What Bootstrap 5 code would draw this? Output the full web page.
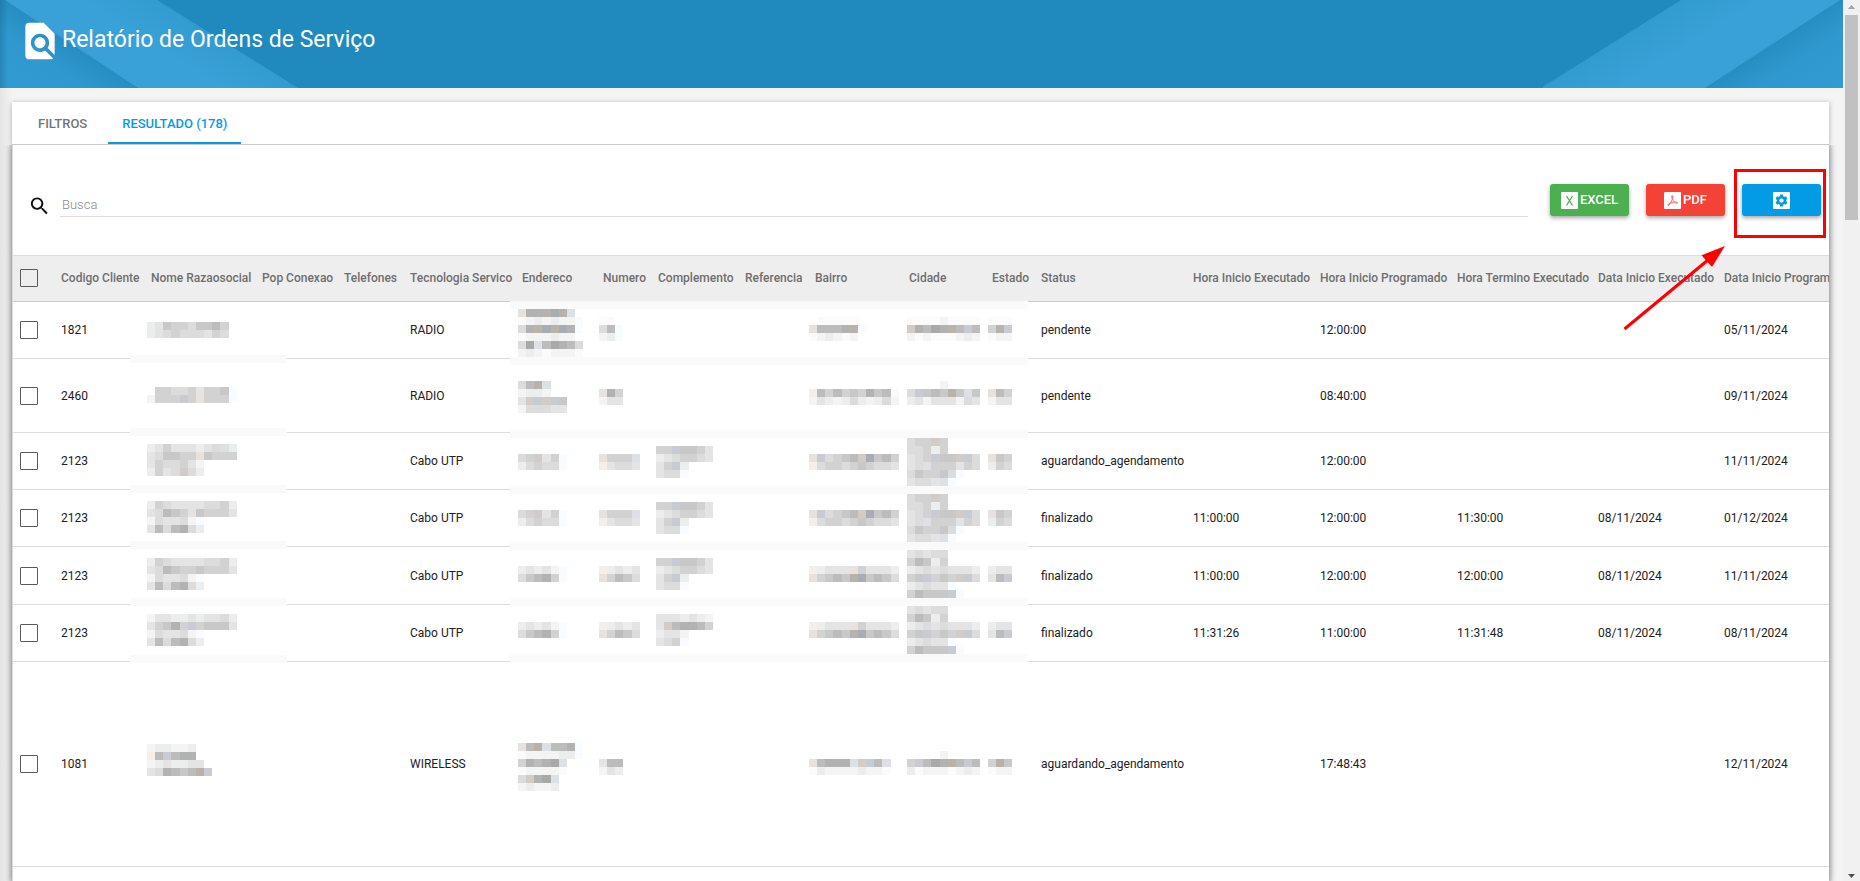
<!DOCTYPE html>
<html lang="pt-BR">
<head>
<meta charset="utf-8">
<meta name="viewport" content="width=device-width, initial-scale=1">
<title>Relatório de Ordens de Serviço</title>
<link href="https://cdn.jsdelivr.net/npm/bootstrap@5.3.0/dist/css/bootstrap.min.css" rel="stylesheet">
<style>
  body { font-family: Roboto, sans-serif; font-size: 12px; color: #212121; background: #f4f4f4; }
  .page-head { height: 88px; background: #2089be; color: #fff; padding-left: 18px; padding-top: 19px; }
  .page-head h1 { font-size: 23px; font-weight: 400; line-height: 28px; margin: 0; padding-top: 7px; }
  .band { position: absolute; top: 0; height: 88px; width: 300px; }
  .band-left { left: 0; }
  .band-right { right: 0; transform: scaleX(-1); }
  .page-body { padding: 14px 14px 0 12px; background: linear-gradient(90deg, #e4e4e4, #f4f4f4 12px); }
  .tab-bar { height: 43px; padding-left: 12px; gap: 7px; background: #fff; border-bottom: 1px solid #c8c8c8; box-shadow: 0 1px 5px rgba(0,0,0,.3); }
  .tab-bar .nav-link { height: 42px; padding: 1px 14px 0; font-size: 13px; line-height: 42px; font-weight: 500; color: #757575; border-bottom: 2px solid transparent; }
  .tab-bar .nav-link.active { color: #039be5; border-color: #039be5; }
  .panel { background: #fff; border-left: 1px solid #dcdcdc; box-shadow: 0 1px 6px 1px rgba(0,0,0,.5); position: relative; clip-path: inset(0 -12px -12px -12px); }
  .tools { height: 110px; padding: 39px 8px 0 15px; }
  .search-box { border: 0; border-bottom: 1px solid #dcdcdc; border-radius: 0; padding: 8px 2px 0; height: 33px; font-size: 13px; margin-right: 22px; margin-left: 9px; background: none; }
  .search-box::placeholder { color: #8c8c8c; font-weight: 300; }
  .tool-btn { width: 79px; height: 32px; padding: 0; border: 0; border-radius: 3px; font-size: 13px; font-weight: 500; color: #fff; box-shadow: 0 2px 4px rgba(0,0,0,.35); gap: 2px; }
  .btn-excel, .btn-excel:hover { background: #4caf50; color: #fff; }
  .btn-pdf, .btn-pdf:hover { background: #f44336; color: #fff; }
  .btn-gear, .btn-gear:hover { background: #039be5; color: #fff; }
  .highlight { position: absolute; top: -15px; left: -8px; right: -5px; bottom: -22px; border: 3px solid #f00; pointer-events: none; }
  .pointer { position: absolute; top: 100px; right: 102px; pointer-events: none; }
  .tool-list { gap: 17px; }
  .grid-wrap { position: relative; overflow: hidden; }
  .orders { width: 1843px; table-layout: fixed; border-collapse: separate; border-spacing: 0; }
  .orders th, .orders td { padding: 0 7px; height: 57px; border-bottom: 1px solid #dcdcdc; white-space: nowrap; vertical-align: middle; font-size: 12px; }
  .orders th { height: 47px; padding-bottom: 2px; background: #eee; border-top: 1px solid #dcdcdc; border-bottom-color: #ccc; color: #6e6e6e; font-weight: 500; }
  .orders tr.tall td { height: 74px; }
  .orders tr.mid td { height: 58px; }
  .orders tr.huge td { height: 205px; }
  .orders input { appearance: none; display: block; width: 18px; height: 18px; border: 1px solid #5a5a5a; border-radius: 1px; margin: 0; background: transparent; }
  .redaction { position: absolute; top: 0; left: 0; pointer-events: none; }
  .rail { width: 17px; background: #f1f1f1; padding: 0 2px; }
  .rail-thumb { height: 23.3%; background: #c1c1c1; }
</style>
</head>
<body class="d-flex vh-100 overflow-hidden">
<div class="flex-grow-1 d-flex flex-column overflow-hidden">
  <header class="page-head position-relative d-flex align-items-start flex-shrink-0">
    <svg class="band band-left" viewBox="0 0 300 88" aria-hidden="true">
      <defs>
        <linearGradient id="corner" gradientUnits="userSpaceOnUse" x1="0" y1="88" x2="48" y2="15"><stop offset="0" stop-color="#329bd2"/><stop offset=".55" stop-color="#2f98ce"/><stop offset="1" stop-color="#2389bd"/></linearGradient>
        <linearGradient id="edge"><stop offset="0" stop-color="#003355" stop-opacity=".2"/><stop offset="1" stop-color="#003355" stop-opacity="0"/></linearGradient>
        <linearGradient id="stripe" gradientUnits="userSpaceOnUse" x1="190" y1="70" x2="215" y2="30"><stop offset="0" stop-color="#39a1d7"/><stop offset="1" stop-color="#319acf"/></linearGradient>
      </defs>
      <path d="M0 0H5L138 88H0z" fill="url(#corner)"/>
      <path d="M5 0H157L298 88H138z" fill="url(#stripe)"/>
      <path d="M0 0H8V88H0z" fill="url(#edge)"/>
    </svg>
    <svg class="band band-right" viewBox="0 0 300 88" aria-hidden="true">
      <path d="M0 0H3L138 88H0z" fill="url(#corner)"/>
      <path d="M3 0H162L302 88H138z" fill="url(#stripe)"/>
    </svg>
    <svg class="position-relative" width="44" height="44" viewBox="0 0 24 24" fill="#fff" aria-hidden="true"><path d="M20 19.59V8l-6-6H6c-1.1 0-1.99.9-1.99 2L4 20c0 1.1.89 2 1.99 2H18c.45 0 .85-.15 1.19-.4l-4.43-4.43c-.8.52-1.74.83-2.76.83-2.76 0-5-2.24-5-5s2.24-5 5-5 5 2.24 5 5c0 1.02-.31 1.96-.83 2.75L20 19.59zM9 13c0 1.66 1.34 3 3 3s3-1.34 3-3-1.34-3-3-3-3 1.34-3 3z"/></svg>
    <h1 class="position-relative">Relatório de Ordens de Serviço</h1>
  </header>

  <main class="page-body flex-grow-1 d-flex flex-column overflow-hidden">
    <nav class="nav tab-bar flex-shrink-0">
      <a class="nav-link" href="#filtros">FILTROS</a>
      <a class="nav-link active" href="#resultado" aria-current="page">RESULTADO (178)</a>
    </nav>
    <section class="panel flex-grow-1" id="resultado">
      <div class="tools d-flex align-items-start">
        <svg class="flex-shrink-0 mt-1" width="23" height="36" viewBox="0 0 24 24" fill="#111" aria-hidden="true"><path d="M15.5 14h-.79l-.28-.27C15.41 12.59 16 11.11 16 9.5 16 5.91 13.09 3 9.5 3S3 5.91 3 9.5 5.91 16 9.5 16c1.61 0 3.09-.59 4.23-1.57l.27.28v.79l5 4.99L20.49 19l-4.99-5zm-6 0C7.01 14 5 11.99 5 9.5S7.01 5 9.5 5 14 7.01 14 9.5 11.99 14 9.5 14z"/></svg>
        <input class="search-box flex-grow-1" type="text" placeholder="Busca" aria-label="Busca">
        <div class="tool-list d-flex">
          <button type="button" class="btn tool-btn btn-excel d-flex align-items-center justify-content-center">
            <svg width="17" height="17" viewBox="0 0 17 17" aria-hidden="true"><rect width="17" height="17" rx="1" fill="#fff"/><path d="M5.5 4l6 9.500M11.500 4l-6 9.500" stroke="#4caf50" stroke-width="1.300" fill="none"/></svg><span>EXCEL</span></button>
          <button type="button" class="btn tool-btn btn-pdf d-flex align-items-center justify-content-center">
            <svg width="17" height="17" viewBox="0 0 17 17" aria-hidden="true"><rect width="17" height="17" rx="1" fill="#fff"/><path d="M8 3.500c1.200 0 .8 2.500 0 4.500-1 2.500-2.800 5.500-4 5.500-1.300-.8 1.500-2.500 5-3.200 2.500-.5 5-.2 4.700.7-.8 1-3.200-.7-4.500-2.500C8.200 6.800 7 4 8 3.500z" stroke="#f66a60" fill="none"/></svg><span>PDF</span></button>
          <div class="position-relative">
            <button type="button" class="btn tool-btn btn-gear d-flex align-items-center justify-content-center" aria-label="Configurações">
              <svg width="17" height="17" viewBox="3 3 18 18" aria-hidden="true"><rect x="3" y="3" width="18" height="18" rx="1" fill="#fff"/><path transform="translate(2.400 2.400) scale(.64 .64) translate(3 3)" fill="#039be5" d="M19.430 12.980c.04-.32.07-.64.07-.98s-.03-.66-.07-.98l2.110-1.650c.19-.15.24-.42.12-.64l-2-3.460c-.12-.22-.39-.3-.61-.22l-2.490 1c-.52-.4-1.080-.73-1.690-.98l-.38-2.650C14.460 2.180 14.250 2 14 2h-4c-.25 0-.46.180-.49.420l-.38 2.650c-.61.25-1.170.59-1.690.98l-2.490-1c-.23-.09-.49 0-.61.220l-2 3.460c-.13.220-.07.490.12.640l2.110 1.650c-.04.320-.07.650-.07.980s.03.660.07.980l-2.110 1.650c-.19.150-.24.420-.12.640l2 3.460c.12.220.39.300.61.220l2.490-1c.52.400 1.080.730 1.690.980l.38 2.650c.03.240.24.420.49.420h4c.25 0 .46-.180.49-.420l.38-2.650c.61-.250 1.170-.590 1.690-.980l2.490 1c.23.090.49 0 .61-.220l2-3.460c.12-.220.07-.490-.12-.640l-2.110-1.650zM12 15.500c-1.930 0-3.500-1.570-3.500-3.500s1.570-3.500 3.500-3.500 3.500 1.570 3.500 3.500-1.570 3.500-3.500 3.500z"/></svg></button>
            <span class="highlight"></span>
          </div>
        </div>
      </div>

      <div class="grid-wrap">
        <table class="orders">
          <colgroup id="cols"></colgroup>
          <thead><tr id="heads"></tr></thead>
          <tbody id="rows"></tbody>
        </table>
        <svg class="redaction" id="redaction" width="1020" height="626" viewBox="13 255 1020 626" shape-rendering="crispEdges" aria-hidden="true"></svg>
      </div>

      <svg class="pointer" width="104" height="86" viewBox="1623 245 104 86" aria-hidden="true"><path d="M1624.500 329L1708 260" stroke="#f00" stroke-width="3" fill="none"/><path d="M1725 246l-23.500 9.300L1712 267z" fill="#f00"/></svg>
    </section>
  </main>
</div>

<div class="rail d-flex flex-column flex-shrink-0" aria-hidden="true">
  <svg class="flex-shrink-0" width="13" height="15" viewBox="0 0 13 15"><path d="M3 9l3.500-4L10 9z" fill="#a3a3a3"/></svg>
  <div class="rail-thumb"></div>
  <svg class="mt-auto flex-shrink-0" width="13" height="15" viewBox="0 0 13 15"><path d="M3 8h7L6.500 12z" fill="#505050"/></svg>
</div>

<script src="https://cdn.jsdelivr.net/npm/bootstrap@5.3.0/dist/js/bootstrap.bundle.min.js"></script>
<script>
  const columns = [
    ['', 41], ['Codigo Cliente', 90], ['Nome Razaosocial', 111], ['Pop Conexao', 82], ['Telefones', 66],
    ['Tecnologia Servico', 112], ['Endereco', 81], ['Numero', 55], ['Complemento', 87], ['Referencia', 70],
    ['Bairro', 94], ['Cidade', 83], ['Estado', 49], ['Status', 152], ['Hora Inicio Executado', 127],
    ['Hora Inicio Programado', 137], ['Hora Termino Executado', 141], ['Data Inicio Executado', 126], ['Data Inicio Programado', 139]
  ];
  // size, code, technology, status, start, planned start, end, start date, planned date
  const orders = [
    ['', '1821', 'RADIO', 'pendente', '', '12:00:00', '', '', '05/11/2024'],
    ['tall', '2460', 'RADIO', 'pendente', '', '08:40:00', '', '', '09/11/2024'],
    ['', '2123', 'Cabo UTP', 'aguardando_agendamento', '', '12:00:00', '', '', '11/11/2024'],
    ['', '2123', 'Cabo UTP', 'finalizado', '11:00:00', '12:00:00', '11:30:00', '08/11/2024', '01/12/2024'],
    ['mid', '2123', 'Cabo UTP', 'finalizado', '11:00:00', '12:00:00', '12:00:00', '08/11/2024', '11/11/2024'],
    ['', '2123', 'Cabo UTP', 'finalizado', '11:31:26', '11:00:00', '11:31:48', '08/11/2024', '08/11/2024'],
    ['huge', '1081', 'WIRELESS', 'aguardando_agendamento', '', '17:48:43', '', '', '12/11/2024']
  ];
  document.getElementById('cols').innerHTML = columns.map(c => `<col style="width:${c[1]}px">`).join('');
  document.getElementById('heads').innerHTML = columns.map((c, i) =>
    i ? `<th scope="col">${c[0]}</th>` : '<th><input type="checkbox" aria-label="Selecionar todos"></th>').join('');
  document.getElementById('rows').innerHTML = orders.map(o => {
    const cells = [o[1], '', '', '', o[2], '', '', '', '', '', '', '', o[3], o[4], o[5], o[6], o[7], o[8]];
    return `<tr class="${o[0]}"><td><input type="checkbox" aria-label="Selecionar ${o[1]}"></td>` +
      cells.map(c => `<td>${c}</td>`).join('') + '</tr>';
  }).join('');

  // Pixelated blocks that hide the customers' personal data: x, y, then one string of tones per line
  const tones = { 0:'#fbfbfb', 1:'#f4f4f4', 2:'#eceded', 3:'#e4e4e4', 4:'#dcdcdc', 5:'#d2d2d2', 6:'#c8c8c8', 7:'#bcbcbc', 8:'#b2b2b2', 9:'#a9a9a9',
    p:'#e8e2de', r:'#d2ccc9', w:'#b8b2ad', b:'#dde1e6', c:'#c8cbd2', g:'#a9adb3', k:'#b8b5a8', i:'#f8fbff', o:'#f5efec' };
  const blocks = [
    [147,322,'23655466 75'.replace(' ',''),'2345444354'],
    [147,387,'.554453556i','1555c5p555i'],
    [518,309,'p88wgwb','01212110','48kgkg8i','0111211','49b79874','1210111i'],
    [518,381,'47wb','1221','3rcrc6','144433'],
    [599,317,'00','47i','12i'], [599,389,'p85','133'],
    [809,317,'.00000','p7778w'.replace('w','')+'wi','012101'],
    [809,389,'o7575658672'.slice(0,9)+'7i','13212421241'],
    [907,317,'000010000','r8798k7c7','101000121'], [907,381,'....1'],
    [907,389,'4c676k6b6','231333143'],
    [988,317,'000','5wc','011'], [988,389,'p75','133'],
    [518,743,'p7wb778i','0111122i','58789b','011110','4r89b','12112'],
    [599,759,'377','132'], [809,759,'p7888brc7b','0211112110'],
    [907,751,'....1'], [907,759,'5c798k7c7','201110121'], [988,759,'5w6','011'],
    [147,744,'122112','o7c788','1232233','348767wc']
  ];
  [[444, '235333234b', '346655p6555'], [501, '25433334452', '34765p65553'],
   [558, '25433334452', '34765565553'], [614, '13322323341', '35685c56663']].forEach((n, i) => {
    const y = [454, 510, 566, 622][i], dark = i > 1;
    blocks.push([147, n[0], n[1].slice(0, 10) + '2', n[2], i ? '143341i' : '3544531', i ? '3747842' : '2534r42']);
    blocks.push([518, y, ...(dark ? ['23231i', '46785i'] : ['45r35i', '24544i'])]);
    blocks.push([599, y, ...(dark ? ['o2323', 'p5764'] : ['p555b', 'o3443'])]);
    blocks.push([656, y - 8, ...(i === 3 ? ['3332321', '3r78875', '2331', '345'+'i'] : ['55c6653', '2345543', '35c2', '344i'])]);
    blocks.push([809, y, ...(dark ? ['o2333p53332', 'p5676wg6764'] : ['pc4567rg675', 'o4554565443'])]);
    blocks.push([907, y - 16, ...(dark ? ['34344', '57625', '234343332', '56c565rc4', '23433i', '57666ci'] : ['455r5', '44525', '345c66rc4', '34b555354', '465564i', '3443bi'])]);
    blocks.push([988, y, ...(dark ? ['233', '37c'] : ['p65', '254'])]);
  });
  let out = '';
  [301,357,430,486,542,598,654].forEach(y => out += `<rect x="510" y="${y}" width="518" height="8" fill="#fafafa"/>`);
  [355,428,485,541,598,655].forEach(y => out += `<rect x="130" y="${y}" width="157" height="8" fill="#fafafa"/>`);
  blocks.forEach(([x, y, ...lines]) => lines.forEach((line, r) => [...line].forEach((t, i) => {
    if (!tones[t]) return;
    const a = x + Math.round(i * 8.15), b = x + Math.round((i + 1) * 8.15);
    out += `<rect x="${a}" y="${y + r * 8}" width="${b - a}" height="8" fill="${tones[t]}"/>`;
  })));
  document.getElementById('redaction').innerHTML = out;
</script>
</body>
</html>
